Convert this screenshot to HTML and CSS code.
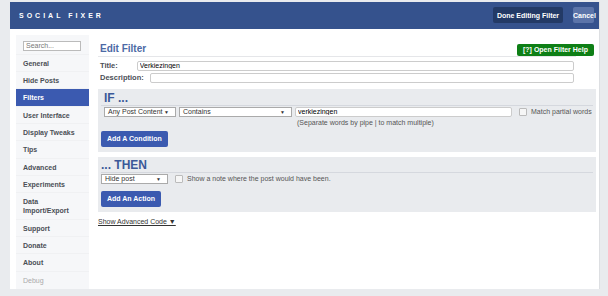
FILE: index.html
```html
<!DOCTYPE html>
<html lang="en">
<head>
    <meta charset="UTF-8">
    <title>Social Fixer - Edit Filter</title>
    <link rel="stylesheet" href="styles.css">
</head>
<body>
    <div class="panel">
        <div class="header">
            <span class="logo">SOCIAL FIXER</span>
            <div class="header-buttons">
                <button type="button" class="btn-done">Done Editing Filter</button>
                <button type="button" class="btn-cancel">Cancel</button>
            </div>
        </div>

        <div class="content">
            <div class="sidebar">
                <div class="search-wrap">
                    <input type="text" class="search" placeholder="Search...">
                </div>
                <ul class="menu">
                    <li>General</li>
                    <li>Hide Posts</li>
                    <li class="active">Filters</li>
                    <li>User Interface</li>
                    <li>Display Tweaks</li>
                    <li>Tips</li>
                    <li>Advanced</li>
                    <li>Experiments</li>
                    <li>Data<br>Import/Export</li>
                    <li>Support</li>
                    <li>Donate</li>
                    <li>About</li>
                    <li class="muted">Debug</li>
                </ul>
            </div>

            <div class="main">
                <div class="title-row">
                    <h1>Edit Filter</h1>
                    <button type="button" class="btn-help">[?] Open Filter Help</button>
                </div>

                <div class="field field-title">
                    <label>Title:</label>
                    <input type="text" class="text" value="Verkiezingen">
                </div>
                <div class="field">
                    <label>Description:</label>
                    <input type="text" class="text">
                </div>

                <div class="box box-if">
                    <h2>IF ...</h2>
                    <div class="row">
                        <div class="select sel-source">Any Post Content</div>
                        <div class="select sel-op">Contains</div>
                        <div class="value-col">
                            <input type="text" class="value" value="verkiezingen">
                            <div class="hint">(Separate words by pipe | to match multiple)</div>
                        </div>
                        <label class="check"><span class="box-check"></span>Match partial words</label>
                    </div>
                    <button type="button" class="btn-blue">Add A Condition</button>
                </div>

                <div class="box box-then">
                    <h2>... THEN</h2>
                    <div class="row">
                        <div class="select sel-action">Hide post</div>
                        <label class="check"><span class="box-check"></span>Show a note where the post would have been.</label>
                    </div>
                    <button type="button" class="btn-blue">Add An Action</button>
                </div>

                <a class="advanced" href="#">Show Advanced Code &#9660;</a>
            </div>
        </div>
    </div>
</body>
</html>
```

FILE: styles.css
```css
/* Grund-Layout */
body {
    margin: 0;
    padding: 2px 0 0 10px;
    background: #e9ebee;
    font-family: "Liberation Sans", Arial, sans-serif;
    font-size: 8px;
    color: #333;
}

.panel {
    width: 589px;
    height: 287px;
    background: #fff;
    border-right: 1px solid #dddfe2;
    display: flex;
    flex-direction: column;
}

/* Kopfzeile */
.header {
    height: 27px;
    background: #35528d;
    display: flex;
    align-items: center;
    justify-content: space-between;
    padding: 0 5px 0 9px;
}

.logo {
    color: #fff;
    font-weight: bold;
    font-size: 7px;
    letter-spacing: 3px;
}

.header-buttons {
    display: flex;
    gap: 10px;
}

button {
    font-family: inherit;
    font-weight: bold;
    font-size: 7px;
    color: #fff;
    border: none;
    border-radius: 2px;
    cursor: pointer;
    padding: 0;
    white-space: nowrap;
}

.btn-done {
    background: #233a66;
    height: 16px;
    width: 70px;
}

.btn-cancel {
    background: #5b74a9;
    height: 16px;
    width: 21px;
}

.content {
    flex: 1;
    display: flex;
}

/* Seitenleiste */
.sidebar {
    width: 73px;
    margin: 6px 0 0 6px;
    background: #f6f7f9;
}

.search-wrap {
    padding: 6px 8px 4px 7px;
}

.search {
    width: 58px;
    height: 10px;
    box-sizing: border-box;
    border: 1px solid #bbb;
    font-family: inherit;
    font-size: 7px;
    padding: 0 2px;
    display: block;
}

.search::placeholder {
    color: #777;
}

.menu {
    list-style: none;
    margin: 0;
    padding: 0;
}

.menu li {
    padding: 4px 0 4.33px 7px;
    line-height: 9px;
    font-size: 7px;
    font-weight: bold;
    color: #4b4f56;
    border-top: 1px solid #f0f1f3;
    margin-top: -1px;
}

.menu li.active {
    background: #3b5ab0;
    color: #fff;
}

.menu li.muted {
    color: #aaa;
    font-weight: normal;
}

/* Hauptbereich */
.main {
    flex: 1;
    padding: 12px 3px 0 9px;
}

.title-row {
    display: flex;
    align-items: center;
    border-bottom: 1px solid #e5e6e9;
    padding: 0 2px;
    width: 474px;
    position: relative;
    height: 15px;
}

h1 {
    margin: 0;
    font-size: 10px;
    color: #4c69a5;
}

.btn-help {
    background: #0e7f16;
    height: 12px;
    width: 77px;
    position: absolute;
    right: -18px;
    top: 3px;
}

.field {
    display: flex;
    align-items: center;
    gap: 6px;
    padding-left: 2px;
    height: 12px;
    width: 474px;
}

.field-title {
    margin-top: 3px;
    gap: 19px;
}

.field label {
    font-weight: bold;
    font-size: 7.5px;
    color: #4b4f56;
}

.text,
.value {
    flex: 1;
    height: 10px;
    box-sizing: border-box;
    border: 1px solid #ccc;
    border-radius: 2px;
    font-family: inherit;
    font-size: 7px;
    padding: 0 2px;
}

/* Bedingungs-Boxen */
.box {
    background: #e9ebee;
    margin-top: 5px;
    padding: 2px 3px 5px 3px;
    width: 492px;
}

h2 {
    margin: 0 0 1px 0;
    font-size: 12px;
    line-height: 14px;
    color: #3b5998;
    font-weight: bold;
    border-bottom: 1px solid #d5d8de;
    padding-left: 3px;
}

.row {
    display: flex;
    align-items: flex-start;
    gap: 3px;
    padding-left: 3px;
    margin-top: 1px;
}

.box-then {
    margin-top: 5px;
    padding-top: 1px;
}

.box-then h2 {
    padding-left: 0;
}

.box-then .row {
    padding-left: 0;
}

.select {
    height: 10px;
    box-sizing: border-box;
    border: 1px solid #aaa;
    background: #fff;
    font-size: 7px;
    line-height: 8px;
    padding-left: 3px;
    position: relative;
}

.select::after {
    content: "\25BC";
    position: absolute;
    right: 6px;
    top: 0;
    font-size: 5px;
}

.sel-source { width: 72px; }
.sel-op { width: 113px; }
.sel-action { width: 67px; }

.value-col {
    width: 217px;
}

.value {
    width: 100%;
    display: block;
}

.hint {
    font-size: 7px;
    color: #555;
    padding: 2px 0 0 2px;
}

.check {
    display: flex;
    align-items: center;
    gap: 4px;
    font-size: 7px;
    color: #555;
    margin-left: 4px;
    height: 10px;
}

.box-check {
    width: 6px;
    height: 6px;
    border: 1px solid #bbb;
    background: #f6f6f6;
    border-radius: 1px;
}

.btn-blue {
    background: #3b5ab0;
    height: 16px;
    padding: 0 6px;
    margin-top: 5px;
    display: block;
}

.box-then .btn-blue {
    margin-top: 7px;
}

.advanced {
    display: inline-block;
    margin-top: 6px;
    color: #333;
    font-size: 7px;
}
```
